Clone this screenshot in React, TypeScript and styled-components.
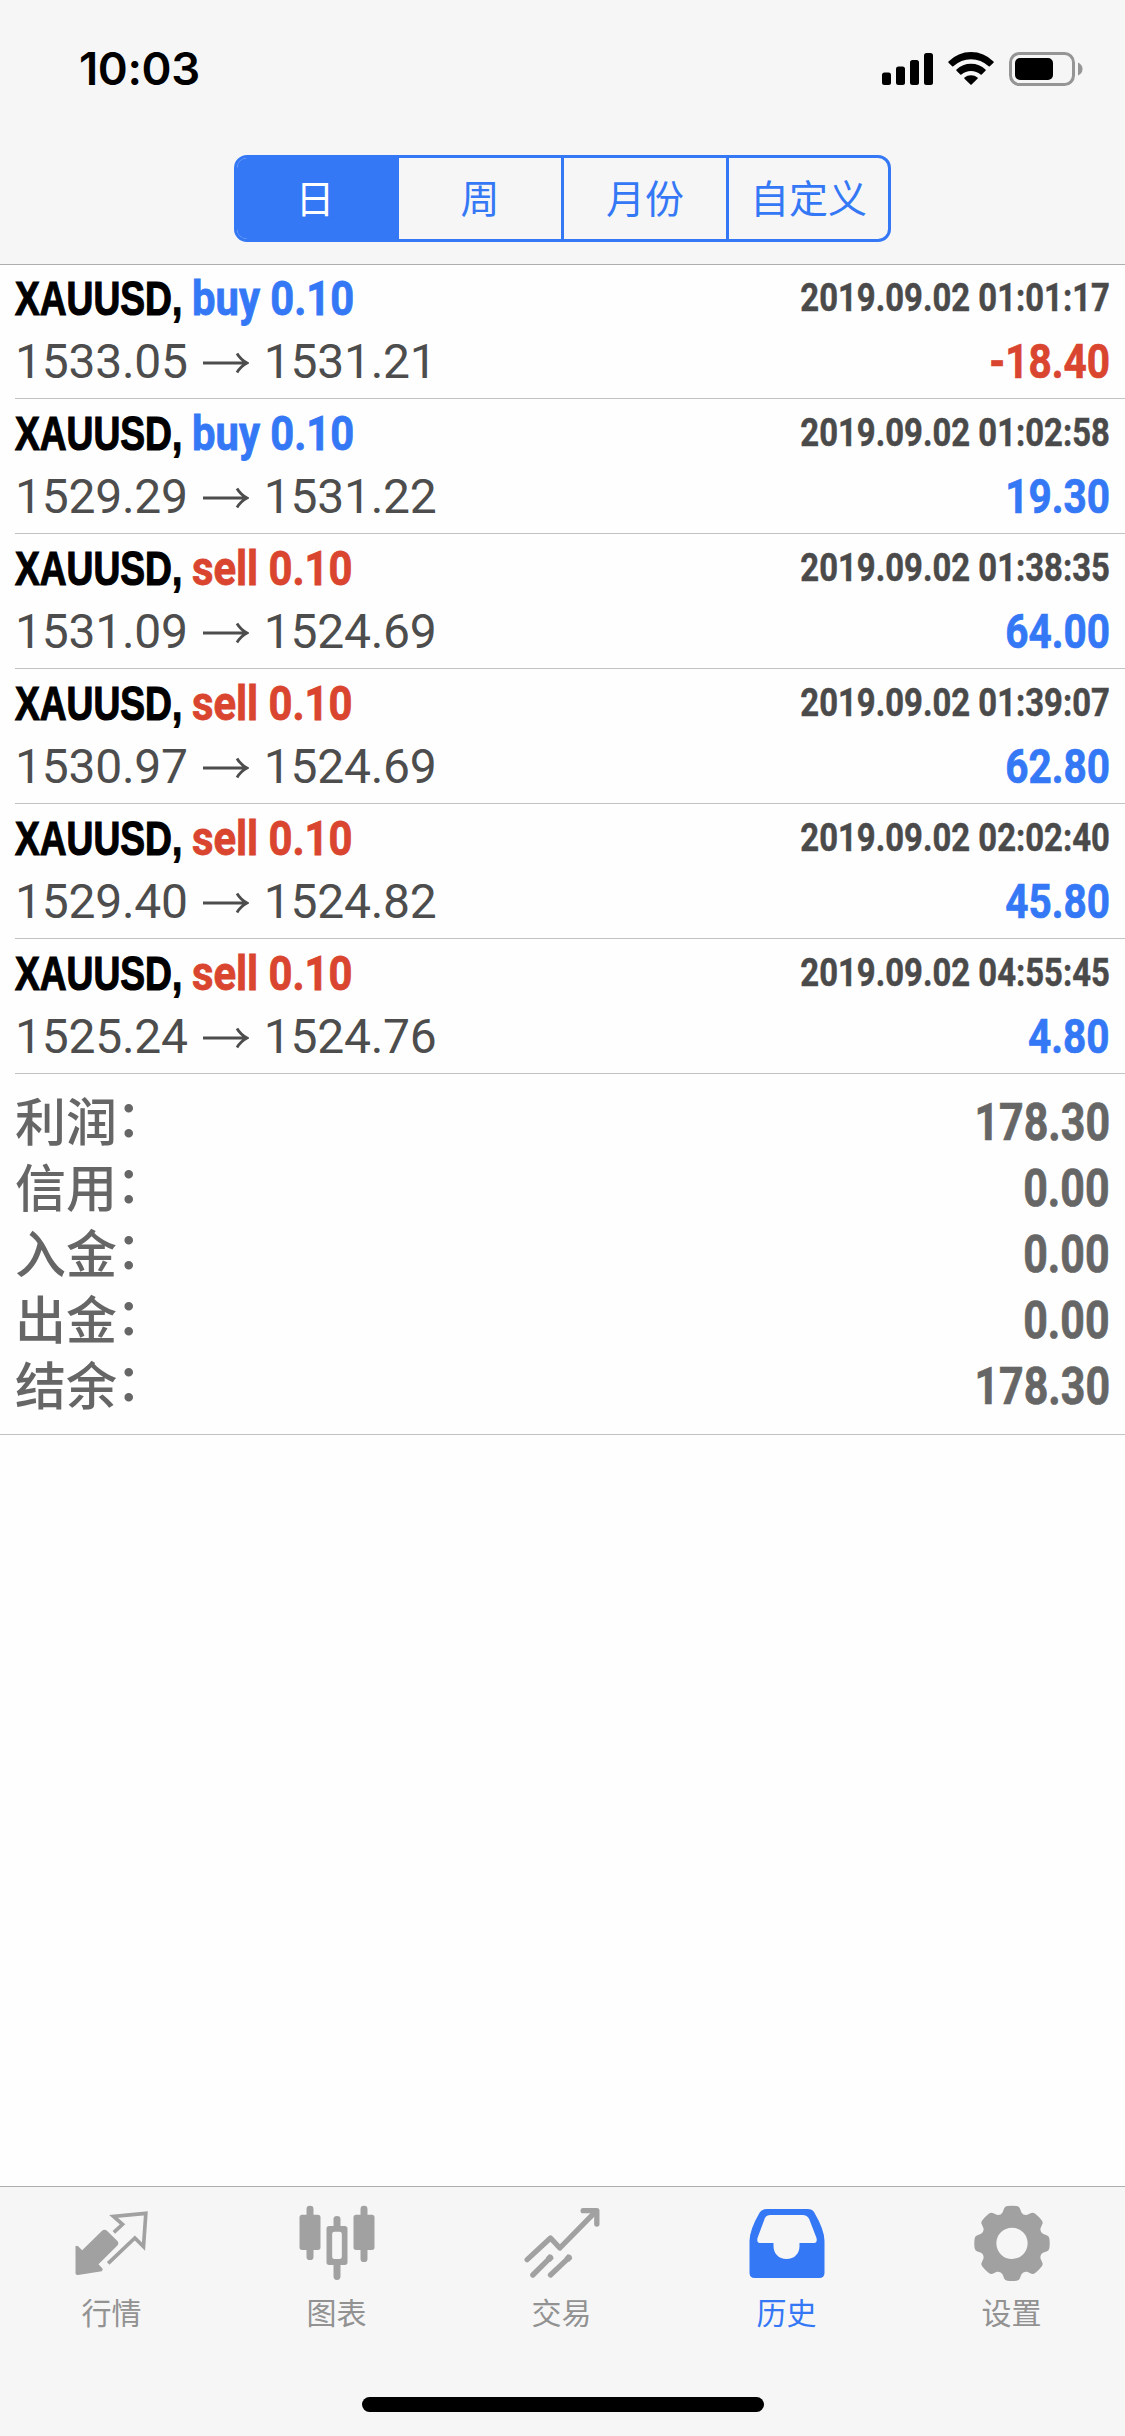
import React from "react";
import styled, { createGlobalStyle } from "styled-components";

const BLUE = "#3478f6";
const RED = "#d9452f";
const GRAY = "#a1a1a1";
const BAR = "#f6f6f6";
const CJK = `"Noto Sans CJK SC", sans-serif`;
const DIGITS = `Roboto, "Liberation Sans", sans-serif`;

const GlobalStyle = createGlobalStyle`
  body { margin: 0; background: #fefefe; }
  * { box-sizing: border-box; }
`;

const Screen = styled.div`
  display: flex;
  flex-direction: column;
  width: 1125px;
  height: 2436px;
  overflow: hidden;
  background: #fefefe;
  font-family: "Liberation Sans", Arial, "Noto Sans CJK SC", sans-serif;
`;

const Header = styled.header`
  height: 265px;
  margin-bottom: -1px;
  flex: none;
  background: ${BAR};
  border-bottom: 1px solid #aeaeae;
`;

const StatusBar = styled.div`
  display: flex;
  justify-content: space-between;
  height: 155px;
  padding: 42px 42px 0 79px;
`;

const Clock = styled.div`
  height: 54px;
  font: 600 45.5px/54px Inter, sans-serif;
  letter-spacing: -0.4px;
  color: #000;
`;

const StatusIcons = styled.svg`
  display: block;
  width: 203px;
  height: 40px;
  margin-top: 8px;
`;

const Segments = styled.div`
  display: grid;
  grid-template-columns: 162px 165px 165px 1fr;
  width: 657px;
  height: 87px;
  margin: 0 auto;
  border: 3px solid ${BLUE};
  border-radius: 13px;
  overflow: hidden;
`;

const Segment = styled.button<{ $active?: boolean }>`
  display: flex;
  align-items: center;
  justify-content: center;
  margin: 0;
  padding: ${(p) => (p.$active ? "0 3px 5px 0" : "0 0 5px")};
  border: 0;
  border-right: 3px solid ${BLUE};
  background: ${(p) => (p.$active ? BLUE : "transparent")};
  color: ${(p) => (p.$active ? "#fff" : BLUE)};
  font: 400 39px/50px ${CJK};
  &:last-child { border-right: 0; }
`;

const DealList = styled.ul`
  margin: 0;
  padding: 0 0 0 15px;
  list-style: none;
`;

const Deal = styled.li`
  height: 135px;
  padding: 3px 15px 0 0;
  border-bottom: 1px solid #c2c2c2;
`;

const Line = styled.div`
  display: flex;
  justify-content: space-between;
  height: 63px;
  line-height: 63px;
  font-size: 48px;
  white-space: nowrap;
`;

const Left = styled.div`
  display: flex;
  align-items: center;
`;

const Symbol = styled.span`
  width: 177px;
  font-weight: 700;
  color: #000;
  -webkit-text-stroke: 1.2px #000;
  transform: scaleX(0.774);
  transform-origin: 0 50%;
`;

const Volume = styled.span<{ $side: string }>`
  font-family: ${DIGITS};
  font-weight: 700;
  color: ${(p) => (p.$side === "buy" ? BLUE : RED)};
  -webkit-text-stroke: 0.8px currentColor;
  transform: scaleX(0.87);
  transform-origin: 0 50%;
`;

const Time = styled.span`
  height: 62px;
  line-height: 62px;
  font-family: ${DIGITS};
  font-size: 38.5px;
  font-weight: 700;
  color: #4a4a4a;
  -webkit-text-stroke: 0.5px currentColor;
  transform: scaleX(0.853);
  transform-origin: 100% 50%;
`;

const Price = styled.span`
  font-family: ${DIGITS};
  font-weight: 400;
  letter-spacing: -0.25px;
  color: #4d4d4d;
`;

const Arrow = styled.svg`
  width: 46px;
  height: 24px;
  margin: 2px 15px 0 15px;
`;

const Profit = styled.span<{ $loss: boolean }>`
  font-family: ${DIGITS};
  font-weight: 700;
  color: ${(p) => (p.$loss ? RED : BLUE)};
  -webkit-text-stroke: 0.7px currentColor;
  transform: scaleX(0.845);
  transform-origin: 100% 50%;
`;

const Summary = styled.section`
  height: 361px;
  padding: 15px 15px 0 15px;
  border-bottom: 1px solid #c2c2c2;
`;

const SummaryRow = styled.div`
  display: flex;
  justify-content: space-between;
  height: 66px;
  line-height: 66px;
  color: #666;
`;

const SummaryLabel = styled.span`
  display: flex;
  height: 61px;
  line-height: 61px;
  font-family: ${CJK};
  font-size: 51px;
  font-weight: 500;
`;

const Colon = styled.span`
  margin-left: -1px;
  height: 52px;
  line-height: 52px;
`;

const SummaryValue = styled.span`
  height: 68px;
  line-height: 68px;
  font-family: ${DIGITS};
  font-size: 51px;
  font-weight: 700;
  -webkit-text-stroke: 0.7px currentColor;
  transform: scaleX(0.842);
  transform-origin: 100% 50%;
`;

const TabBar = styled.nav`
  margin-top: auto;
  height: 250px;
  border-top: 1px solid #aeaeae;
  background: ${BAR};
`;

const Tabs = styled.div`
  display: grid;
  grid-template-columns: repeat(5, 1fr);
  height: 210px;
`;

const Tab = styled.a<{ $active?: boolean }>`
  display: flex;
  flex-direction: column;
  align-items: center;
  padding-top: 13px;
  color: ${(p) => (p.$active ? BLUE : GRAY)};
`;

const TabIcon = styled.svg`
  width: 80px;
  height: 82px;
`;

const TabLabel = styled.span<{ $active?: boolean }>`
  margin: 9px 2px 0 0;
  font: 400 30px/40px ${CJK};
  color: ${(p) => (p.$active ? BLUE : "#929292")};
`;

const HomeIndicator = styled.div`
  width: 402px;
  height: 15px;
  margin: 0 auto;
  border-radius: 8px;
  background: #000;
`;

const gearPath = (() => {
  const cx = 334.5;
  const cy = 220;
  const at = (deg: number, r: number) => {
    const a = (deg * Math.PI) / 180;
    return `${(cx + r * Math.sin(a)).toFixed(1)} ${(cy - r * Math.cos(a)).toFixed(1)}`;
  };
  let d = "";
  for (let i = 0; i < 8; i++) {
    const t = i * 45;
    d += `${i ? "L" : "M"}${at(t - 17, 97)}L${at(t - 12.5, 108)}Q${at(t - 11, 113)} ${at(t - 7, 113)}`;
    d += `Q${at(t, 114)} ${at(t + 7, 113)}Q${at(t + 11, 113)} ${at(t + 12.5, 108)}L${at(t + 17, 97)}`;
    d += `Q${at(t + 22.5, 90)} ${at(t + 28, 97)}`;
  }
  return d + "ZM287.5 220a47 47 0 1 0 94 0a47 47 0 1 0 -94 0Z";
})();

const tabs = [
  {
    label: "行情",
    box: "97.5 90 240 246",
    icon: (
      <>
        <path
          d="M113 229L125 241L184 183Q192 176 200 183L230 212Q237 219 230 227L174 283L187 297L184 304L113 315Q105 315 105 308V229Q108 225 113 229Z"
          fill="currentColor"
        />
        <path
          d="M220 187L246 163L219 139L316 130L309 230L283 204L203 280"
          fill="none"
          stroke="currentColor"
          strokeWidth="11"
        />
      </>
    ),
  },
  {
    label: "图表",
    box: "772.5 90 240 246",
    icon: (
      <g fill="currentColor">
        <rect x="777" y="134" width="63" height="106" rx="8" />
        <rect x="798" y="107" width="21" height="163" rx="10" />
        <rect x="939" y="134" width="63" height="106" rx="8" />
        <rect x="960" y="107" width="21" height="169" rx="10" />
        <path
          fillRule="evenodd"
          d="M866 168H879V148Q879 138 889.500 138Q900 138 900 148V168H913Q921 168 921 176V277Q921 285 913 285H900V319Q900 330 889.500 330Q879 330 879 319V285H866Q858 285 858 277V176Q858 168 866 168ZM882 185Q875 185 875 192V260Q875 267 882 267H897Q904 267 904 260V192Q904 185 897 185Z"
        />
      </g>
    ),
  },
  {
    label: "交易",
    box: "127.5 90 240 246",
    icon: (
      <g fill="none" stroke="currentColor" strokeWidth="16" strokeLinecap="round">
        <path d="M140 269L210 204L238 234L346 124" strokeLinejoin="round" />
        <path d="M308 122H349V162" strokeLinejoin="round" />
        <path d="M157 315L210 262" />
        <path d="M210 315L266 262" />
        <path d="M203 269L213 259M259 269L269 259" strokeLinecap="butt" strokeWidth="19" />
      </g>
    ),
  },
  {
    label: "历史",
    box: "802.5 90 240 246",
    active: true,
    icon: (
      <path
        fillRule="evenodd"
        fill="currentColor"
        d="M860 117H981Q995 117 1001 127Q1032 180 1032 213V308Q1032 324 1016 324H823Q807 324 807 308V213Q807 180 838 127Q845 117 860 117ZM870 135Q858 135 853 145L831 204Q828 219 838 219H879V228C879 251 895 267 918 267C942 267 957 251 957 228V219H1001Q1011 219 1008 204L986 147Q980 135 966 135Z"
      />
    ),
  },
  {
    label: "设置",
    box: "217.5 90 240 246",
    icon: <path fillRule="evenodd" fill="currentColor" d={gearPath} />,
  },
];

const deals = [
  { side: "buy", from: "1533.05", to: "1531.21", time: "01:01:17", profit: "-18.40" },
  { side: "buy", from: "1529.29", to: "1531.22", time: "01:02:58", profit: "19.30" },
  { side: "sell", from: "1531.09", to: "1524.69", time: "01:38:35", profit: "64.00" },
  { side: "sell", from: "1530.97", to: "1524.69", time: "01:39:07", profit: "62.80" },
  { side: "sell", from: "1529.40", to: "1524.82", time: "02:02:40", profit: "45.80" },
  { side: "sell", from: "1525.24", to: "1524.76", time: "04:55:45", profit: "4.80" },
];

const totals = [
  ["利润", "178.30"],
  ["信用", "0.00"],
  ["入金", "0.00"],
  ["出金", "0.00"],
  ["结余", "178.30"],
];

export default function App() {
  return (
    <Screen>
      <GlobalStyle />
      <Header>
        <StatusBar>
          <Clock>10:03</Clock>
          <StatusIcons viewBox="880 50 203 40">
            <rect x="882" y="72.5" width="9" height="12.500" rx="2.500" />
            <rect x="896" y="66.500" width="9" height="18.500" rx="2.500" />
            <rect x="910" y="60" width="9" height="25" rx="2.500" />
            <rect x="924" y="53" width="9" height="32" rx="2.500" />
            <path d="M948.500 61.500Q958 52 971 52T993.500 61.500Q994 62 993.500 62.700L989.800 66.300Q989.300 66.700 988.700 66.300Q981 59.200 971 59.200T953.300 66.300Q952.700 66.700 952.200 66.300L948.500 62.700Q948 62 948.500 61.500Z" />
            <path d="M956.500 69.500Q962.500 63.700 971 63.700T985.500 69.500Q986 70.200 985.500 70.800L981.700 74.500Q981.200 74.900 980.600 74.500Q976.500 70.900 971 70.900T961.400 74.500Q960.800 74.900 960.300 74.500L956.500 70.800Q956 70.200 956.500 69.500Z" />
            <path d="M964.500 77.500Q967.200 75.200 971 75.200T977.500 77.500Q978 78.100 977.500 78.700L971.600 84.500Q971 85 970.400 84.500L964.500 78.700Q964 78.100 964.500 77.500Z" />
            <rect x="1010.500" y="53.500" width="63" height="31" rx="9" fill="none" stroke="#959595" strokeWidth="3" />
            <rect x="1015" y="58" width="38" height="22" rx="5" />
            <path d="M1078 62.500Q1082.500 64.500 1082.500 69T1078 75.500Z" fill="#959595" />
          </StatusIcons>
        </StatusBar>
        <Segments>
          <Segment $active>日</Segment>
          <Segment>周</Segment>
          <Segment>月份</Segment>
          <Segment>自定义</Segment>
        </Segments>
      </Header>

      <DealList>
        {deals.map((d) => (
          <Deal key={d.time}>
            <Line>
              <Left>
                <Symbol>XAUUSD,</Symbol>
                <Volume $side={d.side}>{d.side} 0.10</Volume>
              </Left>
              <Time>2019.09.02 {d.time}</Time>
            </Line>
            <Line>
              <Left>
                <Price>{d.from}</Price>
                <Arrow viewBox="0 0 46 24" fill="none" stroke="#4d4d4d" strokeWidth="2.8">
                  <path d="M0 12H44M34 2.500Q37.500 8.500 44 12Q37.500 15.500 34 21.500" />
                </Arrow>
                <Price>{d.to}</Price>
              </Left>
              <Profit $loss={d.profit.startsWith("-")}>{d.profit}</Profit>
            </Line>
          </Deal>
        ))}
      </DealList>

      <Summary>
        {totals.map(([label, value]) => (
          <SummaryRow key={label}>
            <SummaryLabel>
              {label}
              <Colon>：</Colon>
            </SummaryLabel>
            <SummaryValue>{value}</SummaryValue>
          </SummaryRow>
        ))}
      </Summary>

      <TabBar>
        <Tabs>
          {tabs.map((t) => (
            <Tab key={t.label} $active={t.active}>
              <TabIcon viewBox={t.box}>{t.icon}</TabIcon>
              <TabLabel $active={t.active}>{t.label}</TabLabel>
            </Tab>
          ))}
        </Tabs>
        <HomeIndicator />
      </TabBar>
    </Screen>
  );
}
